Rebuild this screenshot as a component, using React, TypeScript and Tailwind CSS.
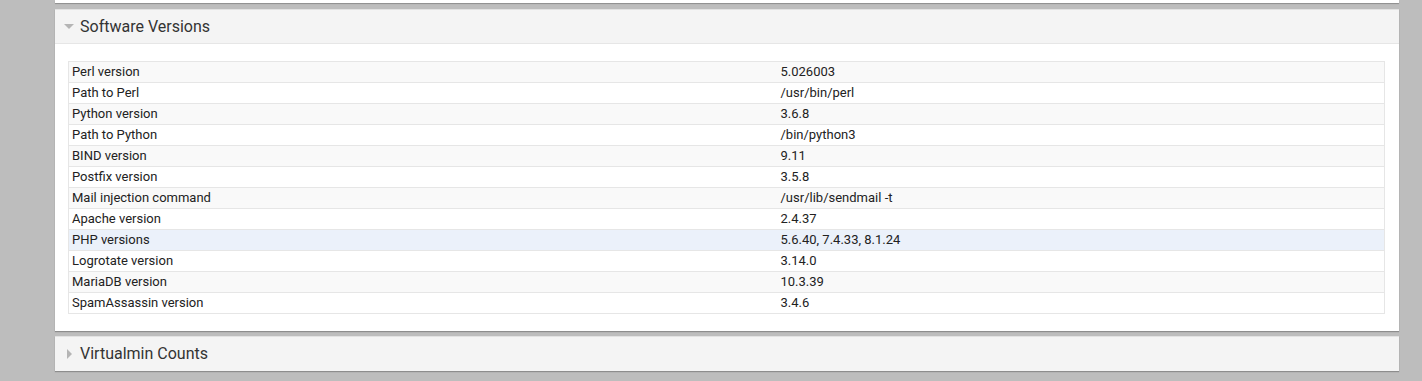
import React from "react";

const rows: [string, string][] = [
  ["Perl version", "5.026003"],
  ["Path to Perl", "/usr/bin/perl"],
  ["Python version", "3.6.8"],
  ["Path to Python", "/bin/python3"],
  ["BIND version", "9.11"],
  ["Postfix version", "3.5.8"],
  ["Mail injection command", "/usr/lib/sendmail -t"],
  ["Apache version", "2.4.37"],
  ["PHP versions", "5.6.40, 7.4.33, 8.1.24"],
  ["Logrotate version", "3.14.0"],
  ["MariaDB version", "10.3.39"],
  ["SpamAssassin version", "3.4.6"],
];

export default function App() {
  return (
    <div
      className="h-[381px] w-full overflow-hidden bg-[#bdbdbd] pl-[55px]"
      style={{ fontFamily: "Roboto, 'Liberation Sans', sans-serif" }}
    >
      <div className="flex w-[1344px] flex-col">
        <div className="h-[3px] bg-white shadow-[0_1px_1px_rgba(0,0,0,0.25)]" />
        <div className="mt-[6px] border-t border-[#e2e2e2] bg-white shadow-[0_1px_1px_rgba(0,0,0,0.25)]">
          <div className="flex h-[34px] items-center border-b border-[#e6e6e6] bg-[#f4f4f4] pl-[9px]">
            <svg width="10" height="6" viewBox="0 0 10 6" className="mr-[6px] mt-[1px]">
              <path d="M0 0 L10 0 L5 5 Z" fill="#b5b5b5" />
            </svg>
            <span className="text-[16px] text-[#333]">Software Versions</span>
          </div>
          <div className="px-[13px] pt-[17px] pb-[17px] pr-[14px]">
            <table className="w-full border-collapse border border-[#e6e6e6] text-[13px] text-[#222]">
              <tbody>
                {rows.map(([k, v], i) => {
                  const bg = k === "PHP versions" ? "bg-[#ebf1fa]" : i % 2 === 0 ? "bg-[#f9f9f9]" : "bg-white";
                  return (
                    <tr key={k} className={`h-[21px] border-b border-[#e6e6e6] ${bg}`}>
                      <td className="w-[709px] pl-[3px] leading-[20px]">{k}</td>
                      <td className="pl-[3px] leading-[20px]">{v}</td>
                    </tr>
                  );
                })}
              </tbody>
            </table>
          </div>
        </div>
        <div className="mt-[5px] flex h-[35px] items-center border-t border-[#e2e2e2] bg-[#f4f4f4] pl-[12px] shadow-[0_1px_1px_rgba(0,0,0,0.25)]">
          <svg width="5" height="10" viewBox="0 0 5 10" className="mr-[8px]">
            <path d="M0 0 L5 5 L0 10 Z" fill="#b5b5b5" />
          </svg>
          <span className="text-[16px] text-[#333]">Virtualmin Counts</span>
        </div>
      </div>
    </div>
  );
}
